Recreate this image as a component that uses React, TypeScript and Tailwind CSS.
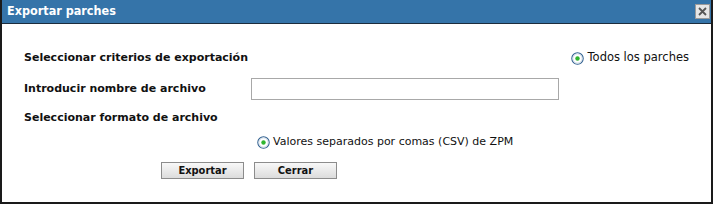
import React from "react";

function Radio() {
  return (
    <svg width="13" height="13" viewBox="0 0 13 13" className="shrink-0">
      <circle cx="6.5" cy="6.5" r="5.7" fill="#ffffff" stroke="#2f5f8f" strokeWidth="1.1" />
      <circle cx="6.5" cy="6.5" r="4.6" fill="none" stroke="#c9d7e3" strokeWidth="0.8" />
      <circle cx="6.5" cy="6.5" r="2.2" fill="#2fb52f" />
    </svg>
  );
}

const condensed = { fontFamily: '"DejaVu Sans Condensed", "DejaVu Sans", sans-serif' };

export default function App() {
  return (
    <div
      className="w-[713px] h-[204px] bg-white flex flex-col border-l-2 border-r-2 border-b-2 border-[#1a1a1a] text-[#111]"
      style={{ fontFamily: '"DejaVu Sans", Verdana, sans-serif' }}
    >
      <div className="h-[24px] shrink-0 bg-[#3574a9] flex items-center justify-between pl-[5px] pr-[1px] border-b border-[#1c2c3c]">
        <span className="text-white font-bold text-[12.5px] leading-none" style={condensed}>
          Exportar parches
        </span>
        <div className="w-[15px] h-[15px] bg-[#e6e6e6] border border-[#9a9a9a] flex items-center justify-center">
          <svg width="11" height="11" viewBox="0 0 11 11">
            <path d="M2 2 L9 9 M9 2 L2 9" stroke="#555" strokeWidth="1.8" />
          </svg>
        </div>
      </div>
      <div className="flex flex-col pl-[22px] pr-[22px] pt-[24px] text-[11px]">
        <div className="flex items-center justify-between h-[20px]">
          <span className="font-bold">Seleccionar criterios de exportación</span>
          <div className="flex items-center gap-[4px]">
            <Radio />
            <span className="text-[11.5px]">Todos los parches</span>
          </div>
        </div>
        <div className="flex items-center h-[22px] mt-[10px]">
          <span className="font-bold w-[227px]">Introducir nombre de archivo</span>
          <div className="w-[308px] h-[22px] border border-[#a8a8a8] bg-white" />
        </div>
        <div className="flex items-center h-[20px] mt-[8px]">
          <span className="font-bold">Seleccionar formato de archivo</span>
        </div>
        <div className="flex items-center h-[16px] mt-[6px] pl-[233px] gap-[3px]">
          <Radio />
          <span>Valores separados por comas (CSV) de ZPM</span>
        </div>
        <div className="flex items-center gap-[10px] pl-[137px] mt-[12px]">
          <button
            className="w-[83px] h-[17px] border border-[#8c8c8c] bg-gradient-to-b from-[#f8f8f8] to-[#dcdcdc] font-bold text-[11px] leading-none"
            style={condensed}
          >
            Exportar
          </button>
          <button
            className="w-[83px] h-[17px] border border-[#8c8c8c] bg-gradient-to-b from-[#f8f8f8] to-[#dcdcdc] font-bold text-[11px] leading-none"
            style={condensed}
          >
            Cerrar
          </button>
        </div>
      </div>
    </div>
  );
}
